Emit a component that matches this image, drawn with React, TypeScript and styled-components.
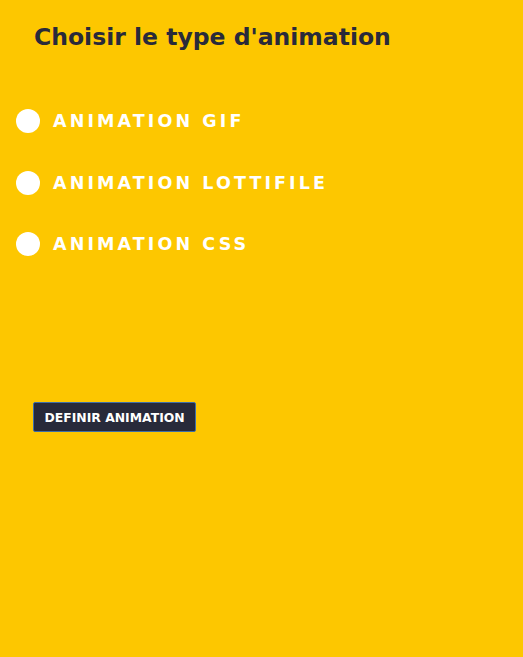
import styled, { createGlobalStyle } from 'styled-components';

const GlobalStyle = createGlobalStyle`
  html, body {
    margin: 0;
    padding: 0;
    background: #fdc700;
  }
  body {
    font-family: "DejaVu Sans", "Open Sans", sans-serif;
  }
`;

const Page = styled.div`
  width: 523px;
  min-height: 657px;
  background: #fdc700;
  display: flex;
  flex-direction: column;
`;

const Titre = styled.h2`
  margin: 22px 0 0 34px;
  font-size: 23.5px;
  font-weight: 700;
  color: #292a3a;
  line-height: 30px;
`;

const Liste = styled.div`
  display: flex;
  flex-direction: column;
  gap: 37.5px;
  margin: 57px 0 0 16px;
`;

const Option = styled.label`
  display: flex;
  align-items: center;
  gap: 13px;
  height: 24px;
  cursor: pointer;
`;

const Pastille = styled.span`
  width: 24px;
  height: 24px;
  border-radius: 50%;
  background: #ffffff;
  flex-shrink: 0;
`;

const Libelle = styled.span`
  font-size: 17.5px;
  font-weight: 800;
  letter-spacing: 3.1px;
  color: #ffffff;
  text-transform: uppercase;
`;

const Bouton = styled.button`
  align-self: flex-start;
  margin: 146px 0 0 33px;
  height: 30px;
  padding: 0 10.5px;
  background: #282a3a;
  border: 1px solid #3d6ea8;
  border-radius: 2px;
  color: #ffffff;
  font-family: "DejaVu Sans", sans-serif;
  font-size: 12.4px;
  font-weight: 700;
  cursor: pointer;
`;

const options = ['Animation gif', 'Animation lottifile', 'Animation css'];

export default function App() {
  return (
    <Page>
      <GlobalStyle />
      <Titre>Choisir le type d'animation</Titre>
      <Liste>
        {options.map((o) => (
          <Option key={o}>
            <Pastille />
            <Libelle>{o}</Libelle>
          </Option>
        ))}
      </Liste>
      <Bouton>DEFINIR ANIMATION</Bouton>
    </Page>
  );
}
